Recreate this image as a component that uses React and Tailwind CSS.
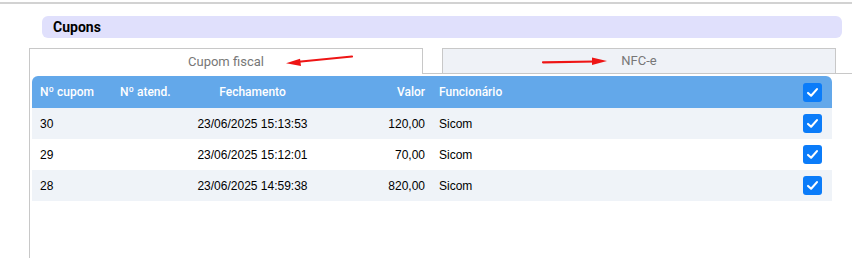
import React from "react";

const rows = [
  { n: "30", at: "", f: "23/06/2025 15:13:53", v: "120,00", u: "Sicom" },
  { n: "29", at: "", f: "23/06/2025 15:12:01", v: "70,00", u: "Sicom" },
  { n: "28", at: "", f: "23/06/2025 14:59:38", v: "820,00", u: "Sicom" },
];

function Check() {
  return (
    <div className="w-[19px] h-[19px] rounded-[3px] bg-[#0b7cf9] flex items-center justify-center">
      <svg width="13" height="13" viewBox="0 0 16 16">
        <path d="M2.5 8.5 L6.3 12 L13.5 3.8" fill="none" stroke="#fff" strokeWidth="2.6" strokeLinecap="round" strokeLinejoin="round" />
      </svg>
    </div>
  );
}

const grid = "grid grid-cols-[80px_78px_125px_116px_362px_39px] items-center";

export default function App() {
  return (
    <div className="relative w-[852px] h-[258px] overflow-hidden bg-white flex flex-col" style={{ fontFamily: "Roboto, 'Liberation Sans', sans-serif" }}>
      <div className="mt-[2px] h-[2px] bg-[#d2d2d2]" />
      <div className="ml-[42px] mt-[12px] w-[800px] h-[22px] rounded-[6px] bg-[#e0e0fc] pl-[11px] flex items-center text-[14px] font-bold text-black">
        Cupons
      </div>
      <div className="ml-[29px] mt-[10px] flex-1 border-l border-[#c8c8c8] w-[900px]">
        <div className="flex h-[26px]">
          <div className="w-[393px] border-t border-r border-[#c8c8c8] flex items-center justify-center text-[13px] text-[#777]">
            Cupom fiscal
          </div>
          <div className="w-[19px] border-b border-[#c8c8c8]" />
          <div className="w-[394px] border border-[#c8c8c8] bg-[#eff2f7] flex items-center justify-center text-[13px] text-[#777]">
            NFC-e
          </div>
          <div className="flex-1 border-b border-[#c8c8c8]" />
        </div>
        <div className="ml-[2px] mt-[2px] w-[800px]">
          <div className={`${grid} h-[32px] rounded-t-[6px] bg-[#63a8ea] text-white text-[12px] font-medium`}>
            <div className="pl-[8px]">Nº cupom</div>
            <div className="pl-[8px]">Nº atend.</div>
            <div className="text-center">Fechamento</div>
            <div className="text-right pr-[6px]">Valor</div>
            <div className="pl-[8px]">Funcionário</div>
            <div className="flex justify-center"><Check /></div>
          </div>
          {rows.map((r, i) => (
            <div
              key={r.n}
              className={`${grid} h-[31px] text-[12px] text-black ${i % 2 === 0 ? "bg-[#eff3f8]" : "bg-white"}`}
              style={{ fontFamily: "'Liberation Sans', Arial, sans-serif" }}
            >
              <div className="pl-[8px]">{r.n}</div>
              <div className="pl-[8px]">{r.at}</div>
              <div className="text-center">{r.f}</div>
              <div className="text-right pr-[6px]">{r.v}</div>
              <div className="pl-[8px]">{r.u}</div>
              <div className="flex justify-center"><Check /></div>
            </div>
          ))}
        </div>
      </div>
      <svg className="absolute left-0 top-0 pointer-events-none" width="852" height="258">
        <line x1="352" y1="56.5" x2="296" y2="62" stroke="#ee1515" strokeWidth="2.2" strokeLinecap="round" />
        <polygon points="286,63.3 300,58.8 301,66" fill="#ee1515" />
        <line x1="543" y1="62.3" x2="595" y2="61.5" stroke="#ee1515" strokeWidth="2.2" strokeLinecap="round" />
        <polygon points="607,61 592,57.5 592,65" fill="#ee1515" />
      </svg>
    </div>
  );
}
